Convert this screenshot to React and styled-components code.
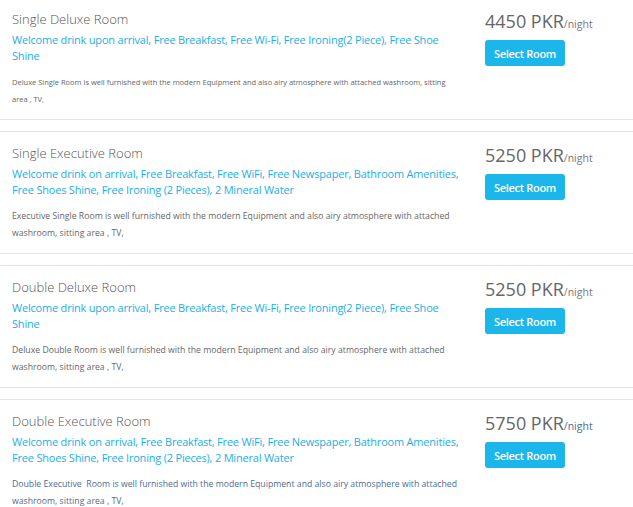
import React from "react";
import styled, { createGlobalStyle } from "styled-components";

const Global = createGlobalStyle`
  html, body { margin: 0; padding: 0; background: #fff; }
  body { font-family: "Open Sans", "Liberation Sans", sans-serif; }
`;

const List = styled.div`
  margin-top: -3px;
  display: flex;
  flex-direction: column;
  gap: 11px;
`;

const Card = styled.div`
  border-top: 1px solid #e4e4e4;
  border-bottom: 1px solid #e4e4e4;
  display: grid;
  grid-template-columns: 450px 1fr;
  column-gap: 23px;
  padding: 11px 12px 11px 12px;
`;

const Info = styled.div`
  display: flex;
  flex-direction: column;
`;

const Title = styled.h3`
  margin: 0;
  font-size: 13px;
  line-height: 20px;
  font-weight: 300;
  color: #555;
`;

const Amenities = styled.p`
  margin: 3px 0 0;
  font-size: 11px;
  line-height: 16px;
  letter-spacing: -0.2px;
  color: #1eaee2;
`;

const Desc = styled.p`
  margin: 10px 0 0;
  font-size: ${(p) => (p.$small ? "7.5px" : "8.7px")};
  line-height: 17px;
  color: ${(p) => (p.$blue ? "#4f6b90" : "#666")};
`;

const Side = styled.div`
  display: flex;
  flex-direction: column;
  align-items: flex-start;
`;

const Price = styled.div`
  font-size: 18px;
  line-height: 24px;
  color: #666;
`;

const Per = styled.span`
  font-size: 10.5px;
  color: ${(p) => (p.$blue ? "#4f6b90" : "#777")};
`;

const Button = styled.button`
  margin-top: 4px;
  width: 80px;
  height: 26px;
  border: none;
  border-radius: 3px;
  background: #1bb6ea;
  color: #fff;
  font-family: "Open Sans", "Liberation Sans", sans-serif;
  font-size: 11px;
  letter-spacing: -0.3px;
  font-weight: 600;
  padding: 0;
  cursor: pointer;
`;

const rooms = [
  {
    title: "Single Deluxe Room",
    amenities:
      "Welcome drink upon arrival, Free Breakfast, Free Wi-Fi, Free Ironing(2 Piece), Free Shoe Shine",
    desc: "Deluxe Single Room is well furnished with the modern Equipment and also airy atmosphere with attached washroom, sitting area , TV,",
    price: "4450",
    small: true,
  },
  {
    title: "Single Executive Room",
    amenities:
      "Welcome drink on arrival, Free Breakfast, Free WiFi, Free Newspaper, Bathroom Amenities, Free Shoes Shine, Free Ironing (2 Pieces), 2 Mineral Water",
    desc: "Executive Single Room is well furnished with the modern Equipment and also airy atmosphere with attached washroom, sitting area , TV,",
    price: "5250",
  },
  {
    title: "Double Deluxe Room",
    amenities:
      "Welcome drink upon arrival, Free Breakfast, Free Wi-Fi, Free Ironing(2 Piece), Free Shoe Shine",
    desc: "Deluxe Double Room is well furnished with the modern Equipment and also airy atmosphere with attached washroom, sitting area , TV,",
    price: "5250",
  },
  {
    title: "Double Executive Room",
    amenities:
      "Welcome drink on arrival, Free Breakfast, Free WiFi, Free Newspaper, Bathroom Amenities, Free Shoes Shine, Free Ironing (2 Pieces), 2 Mineral Water",
    desc: "Double Executive\u00a0 Room is well furnished with the modern Equipment and also airy atmosphere with attached washroom, sitting area , TV,",
    price: "5750",
    blue: true,
  },
];

export default function App() {
  return (
    <>
      <Global />
      <List>
        {rooms.map((r) => (
          <Card key={r.title}>
            <Info>
              <Title>{r.title}</Title>
              <Amenities>{r.amenities}</Amenities>
              <Desc $small={r.small} $blue={r.blue}>{r.desc}</Desc>
            </Info>
            <Side>
              <Price>
                {r.price} PKR<Per $blue={r.blue}>/night</Per>
              </Price>
              <Button>Select Room</Button>
            </Side>
          </Card>
        ))}
      </List>
    </>
  );
}
